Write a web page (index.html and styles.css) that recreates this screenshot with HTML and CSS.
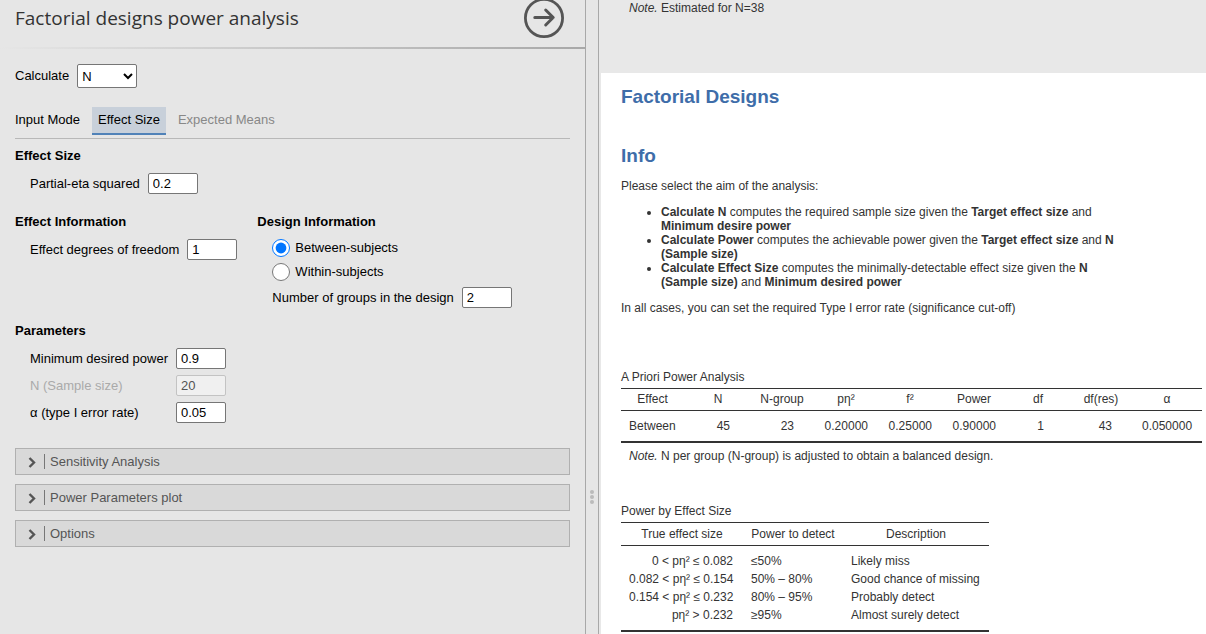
FILE: index.html
```html
<!DOCTYPE html>
<html lang="en">
<head>
<meta charset="utf-8">
<title>Factorial designs power analysis</title>
<link rel="stylesheet" href="styles.css">
</head>
<body>
<div class="app">
  <form class="options">
    <header class="options-header">
      <h1 class="options-title">Factorial designs power analysis</h1>
      <button class="close-button" type="button" aria-label="Hide options">
        <svg width="40" height="40" viewBox="0 0 40 40" fill="none" stroke="#555" stroke-width="3" stroke-linecap="round" stroke-linejoin="round">
          <circle cx="20" cy="20" r="18.6" stroke-width="2.8"/>
          <path d="M10.800 19.500H29M21.700 12L29.200 19.500L21.700 27"/>
        </svg>
      </button>
    </header>
    <div class="options-body">
      <div class="field">
        <label for="aim">Calculate</label>
        <select id="aim" class="select"><option>N</option><option>Power</option><option>Effect Size</option></select>
      </div>

      <div class="tabs">
        <span class="tabs-label">Input Mode</span>
        <button class="tab tab-active" type="button">Effect Size</button>
        <button class="tab" type="button">Expected Means</button>
      </div>

      <section class="group group-first">
        <h2 class="group-title">Effect Size</h2>
        <div class="group-body">
          <div class="field">
            <label for="eta">Partial-eta squared</label>
            <input id="eta" class="text-input" type="text" value="0.2">
          </div>
        </div>
      </section>

      <div class="columns">
        <section class="group">
          <h2 class="group-title">Effect Information</h2>
          <div class="group-body">
            <div class="field">
              <label for="df">Effect degrees of freedom</label>
              <input id="df" class="text-input" type="text" value="1">
            </div>
          </div>
        </section>
        <section class="group">
          <h2 class="group-title">Design Information</h2>
          <div class="group-body">
            <div class="radios">
              <label class="radio"><input type="radio" name="design" checked>Between-subjects</label>
              <label class="radio"><input type="radio" name="design">Within-subjects</label>
            </div>
            <div class="field">
              <label for="groups">Number of groups in the design</label>
              <input id="groups" class="text-input" type="text" value="2">
            </div>
          </div>
        </section>
      </div>

      <section class="group group-parameters">
        <h2 class="group-title">Parameters</h2>
        <div class="group-body parameters">
          <label for="power">Minimum desired power</label>
          <input id="power" class="text-input" type="text" value="0.9">
          <label for="n" class="disabled">N (Sample size)</label>
          <input id="n" class="text-input" type="text" value="20" disabled>
          <label for="alpha">α (type I error rate)</label>
          <input id="alpha" class="text-input" type="text" value="0.05">
        </div>
      </section>

      <div class="panels">
        <button class="panel" type="button">
          <svg width="8" height="12" viewBox="0 0 8 12" fill="none" stroke="#555" stroke-width="2.400"><path d="M1.500 2L6 6.500L1.500 11"/></svg>
          <span class="panel-label">Sensitivity Analysis</span>
        </button>
        <button class="panel" type="button">
          <svg width="8" height="12" viewBox="0 0 8 12" fill="none" stroke="#555" stroke-width="2.400"><path d="M1.500 2L6 6.500L1.500 11"/></svg>
          <span class="panel-label">Power Parameters plot</span>
        </button>
        <button class="panel" type="button">
          <svg width="8" height="12" viewBox="0 0 8 12" fill="none" stroke="#555" stroke-width="2.400"><path d="M1.500 2L6 6.500L1.500 11"/></svg>
          <span class="panel-label">Options</span>
        </button>
      </div>
    </div>
  </form>

  <div class="splitter">
    <svg width="4" height="14" viewBox="0 0 4 14" fill="#bbb"><circle cx="2" cy="2" r="2"/><circle cx="2" cy="7" r="2"/><circle cx="2" cy="12" r="2"/></svg>
  </div>

  <main class="results">
    <div class="previous">
      <p class="note"><i>Note.</i> Estimated for N=38</p>
    </div>
    <article class="analysis">
      <h2 class="heading">Factorial Designs</h2>
      <h2 class="heading heading-info">Info</h2>
      <p class="text">Please select the aim of the analysis:</p>
      <ul class="aims">
        <li><b>Calculate N</b> computes the required sample size given the <b>Target effect size</b> and <b>Minimum desire power</b></li>
        <li><b>Calculate Power</b> computes the achievable power given the <b>Target effect size</b> and <b>N (Sample size)</b></li>
        <li><b>Calculate Effect Size</b> computes the minimally-detectable effect size given the <b>N (Sample size)</b> and <b>Minimum desired power</b></li>
      </ul>
      <p class="text">In all cases, you can set the required Type I error rate (significance cut-off)</p>

      <table class="table table-priori">
        <caption>A Priori Power Analysis</caption>
        <colgroup><col class="col-effect"><col span="6" class="col-value"><col class="col-res"><col class="col-alpha"></colgroup>
        <thead>
          <tr><th>Effect</th><th>N</th><th>N-group</th><th>pη²</th><th>f²</th><th>Power</th><th>df</th><th>df(res)</th><th>α</th></tr>
        </thead>
        <tbody>
          <tr><td class="left">Between</td><td class="int">45</td><td class="int">23</td><td>0.20000</td><td>0.25000</td><td>0.90000</td><td class="int-narrow">1</td><td class="int">43</td><td>0.050000</td></tr>
        </tbody>
      </table>
      <p class="note note-table"><i>Note.</i> N per group (N-group) is adjusted to obtain a balanced design.</p>

      <table class="table table-effect">
        <caption>Power by Effect Size</caption>
        <colgroup><col class="col-true"><col class="col-detect"><col class="col-description"></colgroup>
        <thead>
          <tr><th>True effect size</th><th>Power to detect</th><th>Description</th></tr>
        </thead>
        <tbody>
          <tr><td>0 &lt; pη² ≤ 0.082</td><td class="left">≤50%</td><td class="left">Likely miss</td></tr>
          <tr><td>0.082 &lt; pη² ≤ 0.154</td><td class="left">50% – 80%</td><td class="left">Good chance of missing</td></tr>
          <tr><td>0.154 &lt; pη² ≤ 0.232</td><td class="left">80% – 95%</td><td class="left">Probably detect</td></tr>
          <tr><td>pη² &gt; 0.232</td><td class="left">≥95%</td><td class="left">Almost surely detect</td></tr>
        </tbody>
      </table>
    </article>
  </main>
</div>
</body>
</html>
```

FILE: styles.css
```css
* {
  box-sizing: border-box;
}

body {
  margin: 0;
  background: #e6e6e6;
  font: 13px/16px "Liberation Sans", Arial, sans-serif;
  color: #000;
}

h1, h2, p, ul {
  margin: 0;
}

button {
  font: inherit;
  cursor: pointer;
}

.app {
  display: grid;
  grid-template-columns: 585fr 14px 607fr;
  height: 100vh;
  overflow: hidden;
}

.options,
.results {
  min-width: 0;
  overflow: hidden;
}

/* Options */

.options-header {
  display: flex;
  align-items: center;
  justify-content: space-between;
  margin-top: -2px;
  padding: 0 21px 9px 15px;
  border-bottom: 2px solid;
  border-image: linear-gradient(to right, #e6e6e6, #a8a8a8) 1;
}

.options-title {
  font: 400 19px/28px "Open Sans", sans-serif;
  color: #333;
}

.close-button {
  display: block;
  padding: 0;
  border: 0;
  background: none;
}

.close-button svg {
  display: block;
}

.options-body {
  padding: 15px;
}

.field {
  display: flex;
  align-items: center;
  gap: 8px;
}

.select {
  width: 60px;
  height: 24px;
  padding: 0;
  border: 1px solid #767676;
  border-radius: 2px;
  background: #fff;
  font: 13px "Liberation Sans", Arial, sans-serif;
  color: #000;
}

.text-input {
  width: 50px;
  height: 21px;
  padding: 1px 4px;
  border: 1px solid #767676;
  border-radius: 2px;
  background: #fff;
  font: 13px "Liberation Sans", Arial, sans-serif;
  color: #000;
}

.text-input:disabled {
  border-color: #c3c3c3;
  background: #f0f0f0;
  color: #545454;
}

.disabled {
  color: #aaa;
}

.tabs {
  display: flex;
  align-items: flex-start;
  margin-top: 19px;
  padding-bottom: 3px;
  border-bottom: 1px solid #b8b8b8;
}

.tabs-label {
  margin-right: 12px;
  line-height: 26px;
}

.tab {
  margin-right: 6px;
  padding: 0 6px;
  border: 0;
  border-bottom: 2px solid transparent;
  background: none;
  line-height: 26px;
  color: #888;
}

.tab-active {
  border-bottom-color: #5082b8;
  background: #c8d0da;
  color: #000;
}

.group-first {
  margin-top: 9px;
}

.group-title {
  font-size: 13px;
  line-height: 16px;
}

.group-body {
  margin-top: 9px;
  padding-left: 15px;
}

.columns {
  display: flex;
  gap: 20px;
  margin-top: 20px;
}

.radios {
  display: flex;
  flex-direction: column;
  gap: 6px;
  margin-bottom: 6px;
}

.radio {
  display: flex;
  align-items: center;
  gap: 5px;
  line-height: 18px;
}

.radio input {
  width: 18px;
  height: 18px;
  margin: 0;
}

.group-parameters {
  margin-top: 15px;
}

.parameters {
  display: grid;
  grid-template-columns: max-content max-content;
  align-items: center;
  gap: 6px 8px;
}

.panels {
  display: flex;
  flex-direction: column;
  gap: 9px;
  margin-top: 25px;
}

.panel {
  display: flex;
  align-items: center;
  gap: 8px;
  height: 27px;
  padding: 0 12px;
  border: 1px solid #b0b0b0;
  background: #d9d9d9;
  color: #555;
}

.panel-label {
  padding-left: 5px;
  border-left: 1px solid #777;
  line-height: 15px;
}

/* Splitter */

.splitter {
  display: flex;
  justify-content: center;
  padding-top: 490px;
  border: solid #a8a8a8;
  border-width: 0 1px;
}

/* Results */

.results {
  padding-left: 2px;
  background: #e8e8e8;
  font-size: 12px;
  line-height: 14px;
  color: #333;
}

.previous {
  padding: 1px 20px 58px;
}

.note {
  padding-left: 8px;
}

.analysis {
  padding: 13px 4px 40px 20px;
  background: #fff;
}

.heading {
  font-size: 19px;
  line-height: 22px;
  color: #3e6da9;
}

.heading-info {
  margin-top: 37px;
}

.text {
  margin-top: 12px;
}

.aims {
  max-width: 500px;
  margin-top: 12px;
  padding-left: 40px;
}

.table {
  border-collapse: separate;
  border-spacing: 0;
  table-layout: fixed;
  border-bottom: 2px solid #333;
}

.table caption {
  padding-bottom: 4px;
  text-align: left;
}

.table th {
  border: solid #333;
  border-width: 1px 0;
  font-weight: 400;
  text-align: center;
}

.table td {
  padding: 2px 10px 2px 8px;
  text-align: right;
  white-space: nowrap;
}

.table .left {
  text-align: left;
}

.table tbody tr:first-child td {
  padding-top: 8px;
}

.table tbody tr:last-child td {
  padding-bottom: 8px;
}

.table-priori {
  width: 581px;
  margin-top: 55px;
}

.table-priori th {
  height: 23px;
  padding: 0 12px 2px 8px;
}

.table-priori th:last-child {
  padding-right: 10px;
}

.table-priori td {
  padding-right: 12px;
}

.table-priori td:last-child {
  padding-right: 10px;
}

.table-priori .int {
  padding-right: 22px;
}

.table-priori .int-narrow {
  padding-right: 28px;
}

.col-effect { width: 67px; }
.col-value { width: 64px; }
.col-res { width: 62px; }
.col-alpha { width: 68px; }

.note-table {
  margin-top: 6px;
}

.table-effect {
  width: 368px;
  margin-top: 41px;
}

.table-effect th {
  height: 24px;
  padding: 0 8px;
}

.col-true { width: 122px; }
.col-detect { width: 100px; }
.col-description { width: 146px; }
```
